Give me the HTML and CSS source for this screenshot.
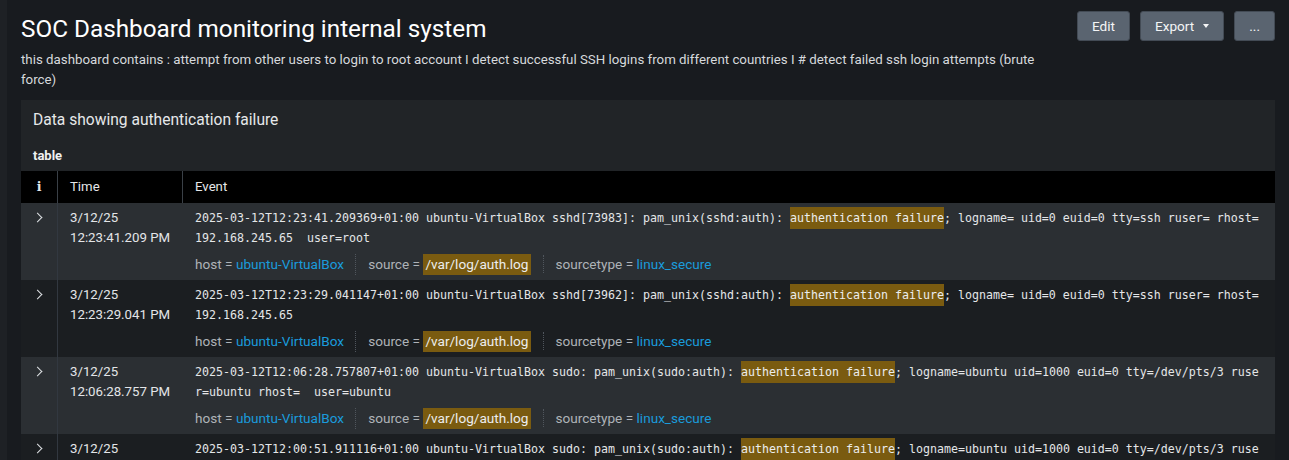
FILE: index.html
```html
<!DOCTYPE html>
<html lang="en">
<head>
<meta charset="utf-8">
<title>SOC Dashboard monitoring internal system</title>
<link rel="stylesheet" href="styles.css">
</head>
<body>
<div class="dash">
  <header class="dash-head">
    <div class="head-text">
      <h1 class="dash-title">SOC Dashboard monitoring internal system</h1>
      <p class="dash-desc">this dashboard contains : attempt from other users to login to root account I detect successful SSH logins from different countries I # detect failed ssh login attempts (brute force)</p>
    </div>
    <div class="actions">
      <button class="btn">Edit</button>
      <button class="btn">Export <span class="caret"></span></button>
      <button class="btn btn-more">...</button>
    </div>
  </header>

  <section class="panel">
    <h2 class="panel-title">Data showing authentication failure</h2>
    <div class="viz-title">table</div>
    <div class="events">
      <div class="ev-head">
        <div class="c-i">i</div>
        <div class="c-time">Time</div>
        <div class="c-event">Event</div>
      </div>

      <div class="ev-row odd">
        <div class="c-i"><span class="chev"></span></div>
        <div class="c-time">3/12/25<br>12:23:41.209 PM</div>
        <div class="c-event">
          <div class="raw">2025-03-12T12:23:41.209369+01:00 ubuntu-VirtualBox sshd[73983]: pam_unix(sshd:auth): <mark class="hl">authentication failure</mark>; logname= uid=0 euid=0 tty=ssh ruser= rhost=192.168.245.65  user=root</div>
          <div class="meta">
            <span class="field">host = <span class="val">ubuntu-VirtualBox</span></span>
            <span class="field">source = <span class="val hlv">/var/log/auth.log</span></span>
            <span class="field">sourcetype = <span class="val">linux_secure</span></span>
          </div>
        </div>
      </div>

      <div class="ev-row">
        <div class="c-i"><span class="chev"></span></div>
        <div class="c-time">3/12/25<br>12:23:29.041 PM</div>
        <div class="c-event">
          <div class="raw">2025-03-12T12:23:29.041147+01:00 ubuntu-VirtualBox sshd[73962]: pam_unix(sshd:auth): <mark class="hl">authentication failure</mark>; logname= uid=0 euid=0 tty=ssh ruser= rhost=192.168.245.65</div>
          <div class="meta">
            <span class="field">host = <span class="val">ubuntu-VirtualBox</span></span>
            <span class="field">source = <span class="val hlv">/var/log/auth.log</span></span>
            <span class="field">sourcetype = <span class="val">linux_secure</span></span>
          </div>
        </div>
      </div>

      <div class="ev-row odd">
        <div class="c-i"><span class="chev"></span></div>
        <div class="c-time">3/12/25<br>12:06:28.757 PM</div>
        <div class="c-event">
          <div class="raw">2025-03-12T12:06:28.757807+01:00 ubuntu-VirtualBox sudo: pam_unix(sudo:auth): <mark class="hl">authentication failure</mark>; logname=ubuntu uid=1000 euid=0 tty=/dev/pts/3 ruser=ubuntu rhost=  user=ubuntu</div>
          <div class="meta">
            <span class="field">host = <span class="val">ubuntu-VirtualBox</span></span>
            <span class="field">source = <span class="val hlv">/var/log/auth.log</span></span>
            <span class="field">sourcetype = <span class="val">linux_secure</span></span>
          </div>
        </div>
      </div>

      <div class="ev-row">
        <div class="c-i"><span class="chev"></span></div>
        <div class="c-time">3/12/25<br>12:00:51.911 PM</div>
        <div class="c-event">
          <div class="raw">2025-03-12T12:00:51.911116+01:00 ubuntu-VirtualBox sudo: pam_unix(sudo:auth): <mark class="hl">authentication failure</mark>; logname=ubuntu uid=1000 euid=0 tty=/dev/pts/3 ruser=ubuntu rhost=  user=ubuntu</div>
          <div class="meta">
            <span class="field">host = <span class="val">ubuntu-VirtualBox</span></span>
            <span class="field">source = <span class="val hlv">/var/log/auth.log</span></span>
            <span class="field">sourcetype = <span class="val">linux_secure</span></span>
          </div>
        </div>
      </div>
    </div>
  </section>
</div>
</body>
</html>
```

FILE: styles.css
```css
html { overflow: hidden; }
body {
  margin: 0;
  background: #181b1f;
  color: #e1e4e7;
  font-family: "Roboto", "Liberation Sans", sans-serif;
  font-size: 13px;
}
.dash {
  padding: 11px 14px 0 21px;
  box-shadow: inset 7px 0 0 #1e2125;
}
.dash-head {
  display: flex;
  align-items: flex-start;
  gap: 22px;
}
.head-text { flex: 1; min-width: 0; }
.dash-title {
  margin: 3px 0 0;
  font-size: 24.3px;
  font-weight: 400;
  line-height: 30px;
  color: #ffffff;
}
.dash-desc {
  margin: 6px 0 0;
  font-size: 13.3px;
  line-height: 20px;
  color: #d6d9dc;
}
.actions { display: flex; gap: 10px; }
.btn {
  height: 30px;
  padding: 0 14px;
  background: #5a6470;
  border: 1px solid #434b55;
  border-radius: 3px;
  color: #f4f5f6;
  font-family: inherit;
  font-size: 13.6px;
  display: flex;
  align-items: center;
  gap: 9px;
}
.caret {
  width: 0; height: 0;
  border-left: 3.5px solid transparent;
  border-right: 3.5px solid transparent;
  border-top: 4px solid #f4f5f6;
}

.panel {
  margin-top: 10px;
  background: #212427;
}
.panel-title {
  margin: 0;
  padding: 10px 12px 0;
  font-size: 15.6px;
  font-weight: 400;
  line-height: 20px;
  color: #e6e8ea;
}
.viz-title {
  padding: 16px 12px 0;
  height: 25px;
  font-weight: 700;
  font-size: 13px;
  line-height: 20px;
  color: #f0f1f2;
}

.ev-head, .ev-row {
  display: grid;
  grid-template-columns: 37px 125px 1fr;
}
.ev-head {
  background: #000000;
  height: 32px;
  align-items: stretch;
}
.ev-head > div {
  display: flex;
  align-items: center;
  line-height: 32px;
  font-size: 13.2px;
  color: #e6e8ea;
}
.ev-head .c-i {
  justify-content: center;
  font-family: "DejaVu Serif", serif;
  font-weight: 700;
  font-size: 12.5px;
  border-right: 1px solid #3a4047;
}
.ev-head .c-time { padding-left: 12px; border-right: 1px solid #3a4047; }
.ev-head .c-event { padding-left: 12px; }

.ev-row { background: #1b1e21; }
.ev-row.odd { background: #2b2f33; }
.ev-row .c-i {
  border-right: 1px solid #323840;
  display: flex;
  justify-content: center;
  padding-top: 10px;
}
.chev {
  width: 6px; height: 6px;
  border-right: 1.5px solid #dfe2e5;
  border-bottom: 1.5px solid #dfe2e5;
  transform: rotate(-45deg);
  margin-left: -3px;
  margin-top: 1px;
}
.ev-row .c-time {
  padding: 5px 12px 0;
  line-height: 20px;
  font-size: 13.25px;
  color: #e3e5e8;
}
.ev-row .c-event {
  padding: 5px 12px 4px;
}
.raw {
  font-family: "DejaVu Sans Mono", "Liberation Mono", monospace;
  font-size: 11.63px;
  line-height: 20px;
  white-space: pre-wrap;
  word-break: break-all;
  max-width: 152.5ch;
  color: #e4e6e8;
  min-height: 40px;
}
.hl {
  background: #7a5b10;
  color: #ecedee;
  padding: 4px 0;
}
.meta {
  margin-top: 4px;
  display: flex;
  align-items: center;
  height: 24px;
  color: #aeb3b8;
  font-size: 13.6px;
}
.field {
  display: flex;
  align-items: center;
  white-space: pre;
  padding: 0 12px;
  border-left: 1px dotted #50565d;
  line-height: 18px;
}
.field:first-child { padding-left: 0; padding-right: 11px; border-left: 0; }
.val { color: #1a9bdb; }
.hlv {
  background: #7a5b10;
  color: #ecedee;
  padding: 0 2px;
  line-height: 21px;
}
```
